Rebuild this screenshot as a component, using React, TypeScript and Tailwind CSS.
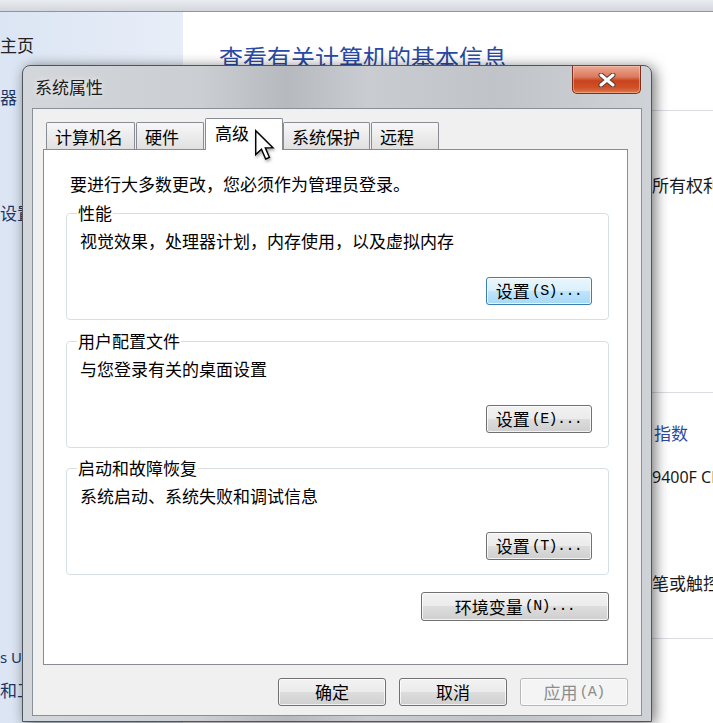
import React from 'react';

const cjk = '[font-family:"Noto_Sans_CJK_SC","Noto_Sans",sans-serif]';

type Tab = { label: string; width: string; active?: boolean };

const tabs: Tab[] = [
  { label: '计算机名', width: 'w-[89px]' },
  { label: '硬件', width: 'w-[68px]' },
  { label: '高级', width: 'w-[78px]', active: true },
  { label: '系统保护', width: 'w-[87px]' },
  { label: '远程', width: 'w-[68px]' },
];

function WinButton({
  label,
  accel,
  className,
  variant = 'normal',
}: {
  label: string;
  accel?: string;
  className?: string;
  variant?: 'normal' | 'focused' | 'disabled';
}) {
  const look =
    variant === 'focused'
      ? 'border-[#3c7fb1] bg-[linear-gradient(#eaf6fd_0%,#d9f0fc_50%,#bee6fd_50%,#a7d9f5_100%)] text-black'
      : variant === 'disabled'
        ? 'border-[#b5b8ba] bg-[#f4f4f4] text-[#8d8d8d]'
        : 'border-[#707070] bg-[linear-gradient(#f2f2f2_0%,#ebebeb_50%,#dddddd_50%,#cfcfcf_100%)] text-black';
  return (
    <button
      className={`flex h-[28px] items-center justify-center rounded-[3px] border shadow-[inset_0_0_0_1px_rgba(255,255,255,0.75)] ${look} ${className ?? ''}`}
    >
      <span className="text-[17px] leading-[20px]">{label}</span>
      {accel && (
        <span className='pl-[2px] pt-[1px] text-[15px] leading-[20px] tracking-[-0.6px] [font-family:"Liberation_Mono",monospace]'>
          {accel}
        </span>
      )}
    </button>
  );
}

function Group({
  title,
  text,
  accel,
  mt,
  focused,
}: {
  title: string;
  text: string;
  accel: string;
  mt: string;
  focused?: boolean;
}) {
  return (
    <fieldset className={`${mt} ml-[22px] w-[543px] rounded-[4px] border border-[#d5dfe5] pb-[14px] pl-[13px] pr-[16px] pt-[8px]`}>
      <legend className="-ml-[3px] px-[1px] text-[17px] leading-[20px]">{title}</legend>
      <div className="text-[17px] leading-[20px]">{text}</div>
      <div className="mt-[26px] flex justify-end">
        <WinButton label="设置" accel={accel} className="w-[106px]" variant={focused ? 'focused' : 'normal'} />
      </div>
    </fieldset>
  );
}

function Cursor() {
  return (
    <svg
      className="absolute left-[254px] top-[129px] z-30 [filter:drop-shadow(1px_2px_1.5px_rgba(0,0,0,0.35))]"
      width="22"
      height="32"
      viewBox="0 0 13 19"
    >
      <path
        d="M1 1 L1 15.2 L4.4 12 L6.9 17.8 L9.1 16.8 L6.7 11.2 L11.2 11.2 Z"
        fill="#fff"
        stroke="#000"
        strokeWidth="0.85"
        strokeLinejoin="miter"
      />
    </svg>
  );
}

function SystemProperties() {
  return (
    <div className={`absolute left-[22px] top-[65px] z-10 flex h-[657px] w-[630px] flex-col rounded-t-[8px] border border-[#4f555d] bg-[linear-gradient(90deg,#d3d6da_0%,#cbced2_28%,#b6babf_42%,#c9ccd0_55%,#c0c4c9_75%,#cfd2d6_100%)] shadow-[3px_2px_14px_rgba(0,0,0,0.55)] ${cjk}`}>
      {/* title bar */}
      <div className="flex h-[42px] shrink-0 justify-between pl-[12px] pr-[10px]">
        <div className="flex items-center text-[17px] text-[#1b1b1b] [text-shadow:0_0_6px_rgba(255,255,255,0.95)]">
          系统属性
        </div>
        <div className="flex h-[28px] w-[69px] items-center justify-center rounded-b-[5px] border border-t-0 border-[#7b2f1d] bg-[linear-gradient(#eaa996_0%,#dc7a5c_40%,#c8431d_55%,#cf5127_80%,#e0794c_100%)] shadow-[inset_0_0_0_1px_rgba(255,210,190,0.45)]">
          <svg width="18" height="14" viewBox="0 0 18 14">
            <path d="M3 2 L15 12 M15 2 L3 12" stroke="#5a3a30" strokeWidth="5" strokeLinecap="round" />
            <path d="M3 2 L15 12 M15 2 L3 12" stroke="#fff" strokeWidth="3" strokeLinecap="round" />
          </svg>
        </div>
      </div>

      {/* client area */}
      <div className="mx-[9px] mb-[5px] flex flex-1 flex-col border border-[#8a9098] bg-[#f0f0f0] pl-[10px] pt-[8px] text-black">
        <div className="flex h-[32px] items-end pl-[2px]">
          {tabs.map((t) =>
            t.active ? (
              <div
                key={t.label}
                className={`${t.width} relative z-10 -mb-[1px] flex h-[32px] items-start rounded-t-[2px] border border-b-0 border-[#898c95] bg-white pl-[9px] pt-[4px] text-[17px] leading-[20px]`}
              >
                {t.label}
              </div>
            ) : (
              <div
                key={t.label}
                className={`${t.width} mr-[1px] flex h-[27px] items-center rounded-t-[2px] border border-b-0 border-[#898c95] bg-[linear-gradient(#f7f7f7_0%,#ececec_50%,#e0e0e0_100%)] pl-[8px] pt-[2px] text-[17px] leading-[20px] first:ml-[1px]`}
              >
                {t.label}
              </div>
            ),
          )}
        </div>

        <div className="flex h-[516px] w-[585px] flex-col border border-[#898c95] bg-white">
          <div className="pl-[26px] pt-[24px] text-[17px] leading-[20px]">要进行大多数更改，您必须作为管理员登录。</div>
          <Group mt="mt-[9px]" title="性能" text="视觉效果，处理器计划，内存使用，以及虚拟内存" accel="(S)..." focused />
          <Group mt="mt-[11px]" title="用户配置文件" text="与您登录有关的桌面设置" accel="(E)..." />
          <Group mt="mt-[10px]" title="启动和故障恢复" text="系统启动、系统失败和调试信息" accel="(T)..." />
          <div className="mr-[18px] mt-[17px] flex justify-end">
            <WinButton label="环境变量" accel="(N)..." className="h-[29px] w-[188px]" />
          </div>
        </div>

        <div className="mr-[13px] mt-[13px] flex justify-end gap-[13px]">
          <WinButton label="确定" className="w-[108px]" />
          <WinButton label="取消" className="w-[108px]" />
          <WinButton label="应用" accel="(A)" className="w-[108px]" variant="disabled" />
        </div>
      </div>
    </div>
  );
}

export default function App() {
  return (
    <div className={`relative flex h-[723px] w-[713px] flex-col overflow-hidden bg-white ${cjk}`}>
      {/* address bar edge */}
      <div className="h-[12px] shrink-0 border-b border-[#8f959d] bg-[linear-gradient(#e9ecf0,#d3d7dd)]" />

      <div className="flex flex-1">
        {/* left task pane */}
        <div className="flex w-[183px] shrink-0 flex-col whitespace-nowrap bg-[linear-gradient(90deg,#dbe5f3,#e8eef8)] text-[17px] leading-[20px]">
          <div className="pt-[23px] text-[#222]">主页</div>
          <div className="mt-[32px] text-[#1d3668]">器</div>
          <div className="mt-[96px] text-[#1d3668]">设置</div>
          <div className='mt-[424px] text-[15px] text-[#1d3668] [font-family:"Noto_Sans",sans-serif]'>s Update</div>
          <div className="mt-[13px] text-[#1d3668]">和工具</div>
        </div>

        {/* main content */}
        <div className="flex flex-1 flex-col whitespace-nowrap">
          <div className="pl-[36px] pt-[31px] text-[24px] leading-[28px] text-[#2a4aa3]">查看有关计算机的基本信息</div>
          <div className="flex flex-col pl-[467px] text-[17px] leading-[20px] text-[#1a1a1a]">
            <div className="mt-[39px] border-t border-[#d9dde2]" />
            <div className="mt-[64px] pl-[2px]">所有权利。</div>
            <div className="mt-[197px] border-t border-[#d9dde2]" />
            <div className="mt-[30px] pl-[4px] text-[#2a4aa3]">指数</div>
            <div className='mt-[24px] pl-[2px] text-[16px] [font-family:"Noto_Sans",sans-serif]'>9400F CPU</div>
            <div className="mt-[86px] pl-[2px]">笔或触控输入</div>
            <div className="mt-[45px] border-t border-[#d9dde2]" />
          </div>
        </div>
      </div>

      <SystemProperties />
      <Cursor />
    </div>
  );
}
